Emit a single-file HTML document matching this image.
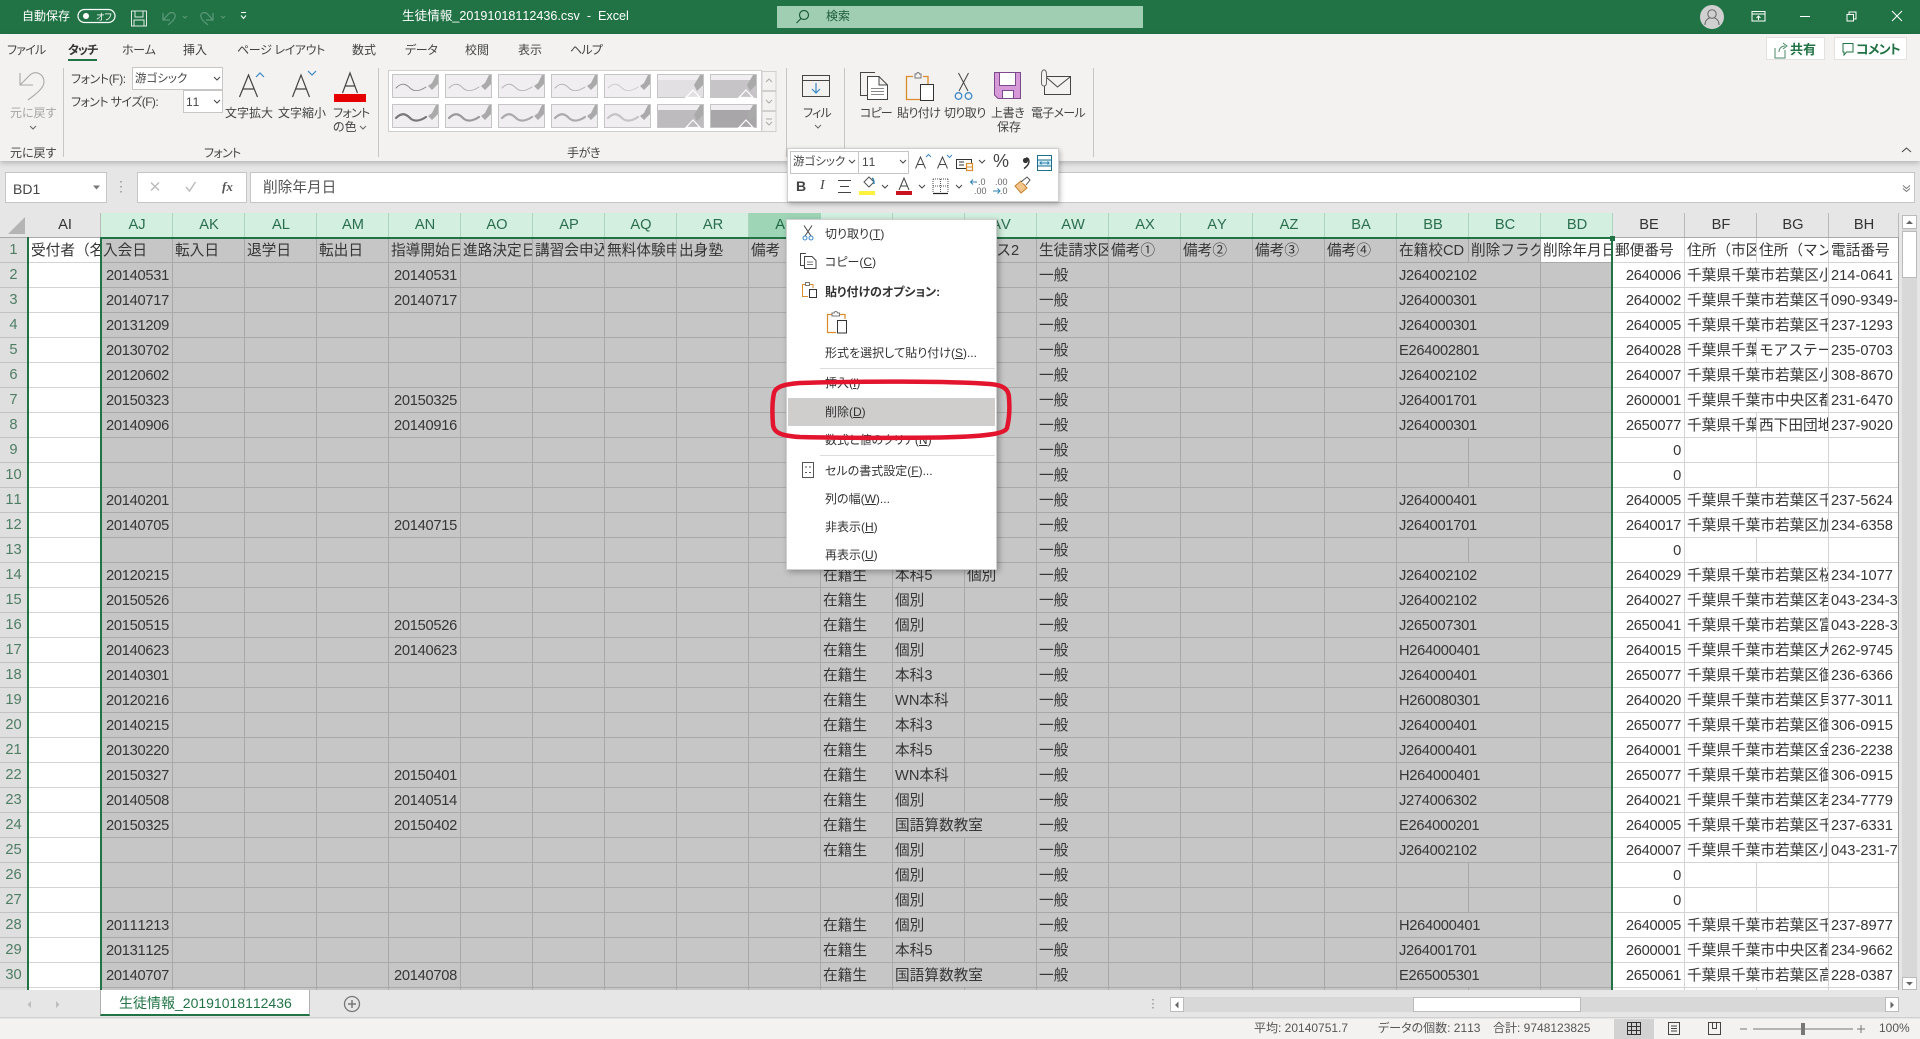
<!DOCTYPE html>
<html lang="ja"><head><meta charset="utf-8"><title>Excel</title>
<style>
html,body{margin:0;padding:0;width:1920px;height:1039px;overflow:hidden;background:#e6e6e6}
body{position:relative;font-family:"Liberation Sans","Noto Sans CJK JP",sans-serif;font-size:12px;color:#444;font-kerning:none}
.t{position:absolute;white-space:nowrap;line-height:16px;font-feature-settings:"palt";}
.k{letter-spacing:-.4px}
.b{position:absolute;box-sizing:border-box}
svg{position:absolute;left:0;top:0;width:1920px;height:1039px;pointer-events:none}
#g{position:absolute;left:29px;top:238px;width:1869px;height:752px;overflow:hidden;background:#fff;
background-image:repeating-linear-gradient(90deg,transparent 0 71px,#d4d4d4 71px 72px),repeating-linear-gradient(180deg,transparent 0 24px,#d4d4d4 24px 25px)}
#s{position:absolute;left:72px;top:0;width:1512px;height:752px;background-color:#c6c6c6;
background-image:repeating-linear-gradient(90deg,transparent 0 71px,#a9a9a9 71px 72px),repeating-linear-gradient(180deg,transparent 0 24px,#a9a9a9 24px 25px)}
#rows{position:absolute;left:0;top:0;width:1869px;color:#363636;font-size:14.67px}
.r{position:relative;height:25px}
.r i{position:absolute;top:0;height:24px;line-height:26px;width:69px;padding:0 0 0 2px;overflow:hidden;white-space:nowrap;font-style:normal;letter-spacing:0}
.AI{left:0}.AJ{left:72px}.AK{left:144px}.AL{left:216px}.AM{left:288px}.AN{left:360px}.AO{left:432px}.AP{left:504px}.AQ{left:576px}.AR{left:648px}.AS{left:720px}.AV{left:936px}.AW{left:1008px}.AX{left:1080px}.AY{left:1152px}.AZ{left:1224px}.BA{left:1296px}.BB{left:1368px}.BC{left:1440px}.BD{left:1512px}.BE{left:1584px}.BF{left:1656px}.BG{left:1728px}.BH{left:1800px}.AT{left:792px}.AU{left:864px}
.r i.AJ,.r i.AN,.r i.BE{width:68px;padding:0 3px 0 0;text-align:right;letter-spacing:-.28px}
.r i.BB{letter-spacing:-.28px;width:141px;background:#c6c6c6}
.h i{letter-spacing:0!important}
.r.h i.BB{width:69px;background:none}
.r.h i.AJ,.r.h i.AN,.r.h i.BE{width:69px;padding:0 0 0 2px;text-align:left}
.r i.o{width:141px;background:#fff}
.r i.ou{width:141px;background:#c6c6c6}
.ch{position:absolute;top:213px;height:24px;width:72px;box-sizing:border-box;padding-left:1px;text-align:center;line-height:24px;font-size:14.67px;border-right:1px solid #b9b9b9;color:#333}
.cs{background:#d3efe0;color:#2a6e4d;border-right:1px solid #aed3bf}
.rh{position:absolute;left:0;width:27px;height:25px;box-sizing:border-box;text-align:center;line-height:25px;font-size:14.67px;color:#4e7d64;border-bottom:1px solid #c2c2c2}
.m{position:absolute;white-space:nowrap;line-height:16px;font-size:12px;color:#333;left:825px;font-feature-settings:"palt"}
.d{position:absolute;white-space:nowrap;font-size:9px;line-height:9px;color:#666}
</style></head><body>
<!-- title bar -->
<div class="b" style="left:0;top:0;width:1920px;height:34px;background:#217346"></div>
<div class="b" style="left:777px;top:6px;width:366px;height:22px;background:#9fceb2"></div>
<div class="t" style="left:22px;top:8px;color:#fff">自動保存</div>
<div class="t" style="left:96px;top:9px;color:#fff;font-size:9px">オフ</div>
<div class="t" style="left:402px;top:8px;color:#fff;font-size:12.6px">生徒情報_20191018112436.csv&nbsp; -&nbsp; Excel</div>
<div class="t" style="left:826px;top:8px;color:#1d5c3a">検索</div>
<!-- ribbon -->
<div class="b" style="left:0;top:34px;width:1920px;height:127px;background:#f3f2f1;box-shadow:0 2px 5px rgba(0,0,0,.22)"></div>
<div class="t k" style="left:7px;top:42px;letter-spacing:-.8px">ファイル</div>
<div class="t" style="left:68px;top:42px;font-weight:700;color:#333;letter-spacing:-1px">タッチ</div>
<div class="b" style="left:68px;top:59px;width:29px;height:2px;background:#217346"></div>
<div class="t k" style="left:122px;top:42px">ホーム</div>
<div class="t" style="left:183px;top:42px">挿入</div>
<div class="t k" style="left:237px;top:42px">ページ レイアウト</div>
<div class="t" style="left:352px;top:42px">数式</div>
<div class="t k" style="left:405px;top:42px">データ</div>
<div class="t" style="left:465px;top:42px">校閲</div>
<div class="t" style="left:518px;top:42px">表示</div>
<div class="t k" style="left:570px;top:42px;letter-spacing:-.8px">ヘルプ</div>
<div class="b" style="left:1766px;top:37px;width:59px;height:23px;background:#fff;border:1px solid #e4e2e0"></div>
<div class="t" style="left:1790px;top:42px;color:#217346;font-weight:700;font-size:13px">共有</div>
<div class="b" style="left:1834px;top:37px;width:73px;height:23px;background:#fff;border:1px solid #e4e2e0"></div>
<div class="t" style="left:1856px;top:42px;color:#217346;font-weight:700;font-size:13px;letter-spacing:-.8px">コメント</div>

<div class="b" style="left:63px;top:68px;width:1px;height:89px;background:#c8c6c4"></div>
<div class="b" style="left:378px;top:68px;width:1px;height:89px;background:#c8c6c4"></div>
<div class="b" style="left:786px;top:68px;width:1px;height:89px;background:#c8c6c4"></div>
<div class="b" style="left:844px;top:68px;width:1px;height:89px;background:#c8c6c4"></div>
<div class="b" style="left:1093px;top:68px;width:1px;height:89px;background:#c8c6c4"></div>

<div class="t" style="left:10px;top:105px;color:#a6a6a6">元に戻す</div>
<div class="t" style="left:10px;top:145px">元に戻す</div>
<div class="t k" style="left:71px;top:71px">フォント(F):</div>
<div class="b" style="left:132px;top:67px;width:91px;height:23px;background:#fff;border:1px solid #c8c6c4"></div>
<div class="t" style="left:135px;top:71px;font-size:11.5px">游ゴシック</div>
<div class="t k" style="left:71px;top:94px;letter-spacing:-.6px">フォント サイズ(F):</div>
<div class="b" style="left:183px;top:90px;width:40px;height:23px;background:#fff;border:1px solid #c8c6c4"></div>
<div class="t" style="left:186px;top:94px">11</div>
<div class="t" style="left:225px;top:105px">文字拡大</div>
<div class="t" style="left:278px;top:105px">文字縮小</div>
<div class="t k" style="left:333px;top:105px;letter-spacing:-.7px">フォント</div>
<div class="t" style="left:333px;top:119px">の色</div>
<div class="t k" style="left:204px;top:145px;letter-spacing:-.7px">フォント</div>
<div class="t k" style="left:567px;top:145px">手がき</div>
<div class="t k" style="left:803px;top:105px;letter-spacing:-.9px">フィル</div>
<div class="t k" style="left:860px;top:105px;letter-spacing:-.9px">コピー</div>
<div class="t k" style="left:897px;top:105px;letter-spacing:-.6px">貼り付け</div>
<div class="t k" style="left:944px;top:105px;letter-spacing:-.6px">切り取り</div>
<div class="t k" style="left:991px;top:105px">上書き</div>
<div class="t" style="left:997px;top:119px">保存</div>
<div class="t k" style="left:1031px;top:105px;letter-spacing:-.7px">電子メール</div>
<!-- formula bar -->
<div class="b" style="left:5px;top:172px;width:102px;height:31px;background:#fff;border:1px solid #c6c6c6"></div>
<div class="t" style="left:13px;top:181px;font-size:14px;color:#444;font-feature-settings:normal">BD1</div>
<div class="b" style="left:137px;top:172px;width:110px;height:31px;background:#fff;border:1px solid #c6c6c6"></div>
<div class="b" style="left:250px;top:172px;width:1665px;height:31px;background:#fff;border:1px solid #c6c6c6"></div>
<div class="t" style="left:263px;top:180px;font-size:14.67px;color:#555;font-feature-settings:normal">削除年月日</div>
<div class="t" style="left:222px;top:179px;font-family:'Liberation Serif',serif;font-style:italic;font-weight:700;font-size:13px;color:#555">fx</div>
<!-- corner & headers -->
<div class="b" style="left:0;top:213px;width:1900px;height:25px;background:#e6e6e6"></div>
<div class="ch" style="left:29px;">AI</div>
<div class="ch cs" style="left:101px">AJ</div><div class="ch cs" style="left:173px">AK</div><div class="ch cs" style="left:245px">AL</div><div class="ch cs" style="left:317px">AM</div><div class="ch cs" style="left:389px">AN</div><div class="ch cs" style="left:461px">AO</div><div class="ch cs" style="left:533px">AP</div><div class="ch cs" style="left:605px">AQ</div><div class="ch cs" style="left:677px">AR</div><div class="ch cs" style="left:749px;background:#9fd5b7;border-color:#9fd5b7;color:#1f6a43">AS</div><div class="ch cs" style="left:821px">AT</div><div class="ch cs" style="left:893px">AU</div><div class="ch cs" style="left:965px">AV</div><div class="ch cs" style="left:1037px">AW</div><div class="ch cs" style="left:1109px">AX</div><div class="ch cs" style="left:1181px">AY</div><div class="ch cs" style="left:1253px">AZ</div><div class="ch cs" style="left:1325px">BA</div><div class="ch cs" style="left:1397px">BB</div><div class="ch cs" style="left:1469px">BC</div><div class="ch cs" style="left:1541px">BD</div>
<div class="ch" style="left:1613px">BE</div><div class="ch" style="left:1685px">BF</div><div class="ch" style="left:1757px">BG</div><div class="ch" style="left:1829px;width:70px">BH</div>
<div class="b" style="left:0;top:237px;width:1899px;height:1px;background:#a8a8a8"></div>
<!-- row headers -->
<div class="b" style="left:0;top:238px;width:27px;height:752px;background:#dfdfdf"></div>
<div class="rh" style="top:238px">1</div><div class="rh" style="top:263px">2</div><div class="rh" style="top:288px">3</div><div class="rh" style="top:313px">4</div><div class="rh" style="top:338px">5</div><div class="rh" style="top:363px">6</div><div class="rh" style="top:388px">7</div><div class="rh" style="top:413px">8</div><div class="rh" style="top:438px">9</div><div class="rh" style="top:463px">10</div><div class="rh" style="top:488px">11</div><div class="rh" style="top:513px">12</div><div class="rh" style="top:538px">13</div><div class="rh" style="top:563px">14</div><div class="rh" style="top:588px">15</div><div class="rh" style="top:613px">16</div><div class="rh" style="top:638px">17</div><div class="rh" style="top:663px">18</div><div class="rh" style="top:688px">19</div><div class="rh" style="top:713px">20</div><div class="rh" style="top:738px">21</div><div class="rh" style="top:763px">22</div><div class="rh" style="top:788px">23</div><div class="rh" style="top:813px">24</div><div class="rh" style="top:838px">25</div><div class="rh" style="top:863px">26</div><div class="rh" style="top:888px">27</div><div class="rh" style="top:913px">28</div><div class="rh" style="top:938px">29</div><div class="rh" style="top:963px">30</div>
<div class="b" style="left:27px;top:237px;width:2px;height:753px;background:#217346"></div>
<!-- grid -->
<div id="g"><div id="s"></div>
<div class="b" style="left:1512px;top:0;width:71px;height:24px;background:#fff"></div>
<div id="rows">
<div class="r h"><i class="AI">受付者（名前）</i><i class="AJ">入会日</i><i class="AK">転入日</i><i class="AL">退学日</i><i class="AM">転出日</i><i class="AN">指導開始日</i><i class="AO">進路決定日</i><i class="AP">講習会申込</i><i class="AQ">無料体験申</i><i class="AR">出身塾</i><i class="AS">備考</i><i class="AV">コース2</i><i class="AW">生徒請求区分</i><i class="AX">備考①</i><i class="AY">備考②</i><i class="AZ">備考③</i><i class="BA">備考④</i><i class="BB">在籍校CD</i><i class="BC">削除フラグ</i><i class="BD">削除年月日</i><i class="BE">郵便番号</i><i class="BF">住所（市区</i><i class="BG">住所（マン</i><i class="BH">電話番号</i></div>
<div class="r"><i class="AJ">20140531</i><i class="AN">20140531</i><i class="AW">一般</i><i class="BB">J264002102</i><i class="BE">2640006</i><i class="BF o">千葉県千葉市若葉区小</i><i class="BH">214-0641</i></div>
<div class="r"><i class="AJ">20140717</i><i class="AN">20140717</i><i class="AW">一般</i><i class="BB">J264000301</i><i class="BE">2640002</i><i class="BF o">千葉県千葉市若葉区千</i><i class="BH">090-9349-</i></div>
<div class="r"><i class="AJ">20131209</i><i class="AW">一般</i><i class="BB">J264000301</i><i class="BE">2640005</i><i class="BF o">千葉県千葉市若葉区千</i><i class="BH">237-1293</i></div>
<div class="r"><i class="AJ">20130702</i><i class="AW">一般</i><i class="BB">E264002801</i><i class="BE">2640028</i><i class="BF">千葉県千葉市</i><i class="BG">モアステーション</i><i class="BH">235-0703</i></div>
<div class="r"><i class="AJ">20120602</i><i class="AW">一般</i><i class="BB">J264002102</i><i class="BE">2640007</i><i class="BF o">千葉県千葉市若葉区小</i><i class="BH">308-8670</i></div>
<div class="r"><i class="AJ">20150323</i><i class="AN">20150325</i><i class="AW">一般</i><i class="BB">J264001701</i><i class="BE">2600001</i><i class="BF o">千葉県千葉市中央区都</i><i class="BH">231-6470</i></div>
<div class="r"><i class="AJ">20140906</i><i class="AN">20140916</i><i class="AW">一般</i><i class="BB">J264000301</i><i class="BE">2650077</i><i class="BF">千葉県千葉市</i><i class="BG">西下田団地</i><i class="BH">237-9020</i></div>
<div class="r"><i class="AW">一般</i><i class="BE">0</i></div>
<div class="r"><i class="AW">一般</i><i class="BE">0</i></div>
<div class="r"><i class="AJ">20140201</i><i class="AW">一般</i><i class="BB">J264000401</i><i class="BE">2640005</i><i class="BF o">千葉県千葉市若葉区千</i><i class="BH">237-5624</i></div>
<div class="r"><i class="AJ">20140705</i><i class="AN">20140715</i><i class="AW">一般</i><i class="BB">J264001701</i><i class="BE">2640017</i><i class="BF o">千葉県千葉市若葉区加</i><i class="BH">234-6358</i></div>
<div class="r"><i class="AW">一般</i><i class="BE">0</i></div>
<div class="r"><i class="AJ">20120215</i><i class="AT">在籍生</i><i class="AU">本科5</i><i class="AV">個別</i><i class="AW">一般</i><i class="BB">J264002102</i><i class="BE">2640029</i><i class="BF o">千葉県千葉市若葉区桜</i><i class="BH">234-1077</i></div>
<div class="r"><i class="AJ">20150526</i><i class="AT">在籍生</i><i class="AU">個別</i><i class="AW">一般</i><i class="BB">J264002102</i><i class="BE">2640027</i><i class="BF o">千葉県千葉市若葉区若</i><i class="BH">043-234-3</i></div>
<div class="r"><i class="AJ">20150515</i><i class="AN">20150526</i><i class="AT">在籍生</i><i class="AU">個別</i><i class="AW">一般</i><i class="BB">J265007301</i><i class="BE">2650041</i><i class="BF o">千葉県千葉市若葉区富</i><i class="BH">043-228-3</i></div>
<div class="r"><i class="AJ">20140623</i><i class="AN">20140623</i><i class="AT">在籍生</i><i class="AU">個別</i><i class="AW">一般</i><i class="BB">H264000401</i><i class="BE">2640015</i><i class="BF o">千葉県千葉市若葉区大</i><i class="BH">262-9745</i></div>
<div class="r"><i class="AJ">20140301</i><i class="AT">在籍生</i><i class="AU">本科3</i><i class="AW">一般</i><i class="BB">J264000401</i><i class="BE">2650077</i><i class="BF o">千葉県千葉市若葉区御</i><i class="BH">236-6366</i></div>
<div class="r"><i class="AJ">20120216</i><i class="AT">在籍生</i><i class="AU">WN本科</i><i class="AW">一般</i><i class="BB">H260080301</i><i class="BE">2640020</i><i class="BF o">千葉県千葉市若葉区貝</i><i class="BH">377-3011</i></div>
<div class="r"><i class="AJ">20140215</i><i class="AT">在籍生</i><i class="AU">本科3</i><i class="AW">一般</i><i class="BB">J264000401</i><i class="BE">2650077</i><i class="BF o">千葉県千葉市若葉区御</i><i class="BH">306-0915</i></div>
<div class="r"><i class="AJ">20130220</i><i class="AT">在籍生</i><i class="AU">本科5</i><i class="AW">一般</i><i class="BB">J264000401</i><i class="BE">2640001</i><i class="BF o">千葉県千葉市若葉区金</i><i class="BH">236-2238</i></div>
<div class="r"><i class="AJ">20150327</i><i class="AN">20150401</i><i class="AT">在籍生</i><i class="AU">WN本科</i><i class="AW">一般</i><i class="BB">H264000401</i><i class="BE">2650077</i><i class="BF o">千葉県千葉市若葉区御</i><i class="BH">306-0915</i></div>
<div class="r"><i class="AJ">20140508</i><i class="AN">20140514</i><i class="AT">在籍生</i><i class="AU">個別</i><i class="AW">一般</i><i class="BB">J274006302</i><i class="BE">2640021</i><i class="BF o">千葉県千葉市若葉区若</i><i class="BH">234-7779</i></div>
<div class="r"><i class="AJ">20150325</i><i class="AN">20150402</i><i class="AT">在籍生</i><i class="AU ou">国語算数教室</i><i class="AW">一般</i><i class="BB">E264000201</i><i class="BE">2640005</i><i class="BF o">千葉県千葉市若葉区千</i><i class="BH">237-6331</i></div>
<div class="r"><i class="AT">在籍生</i><i class="AU">個別</i><i class="AW">一般</i><i class="BB">J264002102</i><i class="BE">2640007</i><i class="BF o">千葉県千葉市若葉区小</i><i class="BH">043-231-7</i></div>
<div class="r"><i class="AU">個別</i><i class="AW">一般</i><i class="BE">0</i></div>
<div class="r"><i class="AU">個別</i><i class="AW">一般</i><i class="BE">0</i></div>
<div class="r"><i class="AJ">20111213</i><i class="AT">在籍生</i><i class="AU">個別</i><i class="AW">一般</i><i class="BB">H264000401</i><i class="BE">2640005</i><i class="BF o">千葉県千葉市若葉区千</i><i class="BH">237-8977</i></div>
<div class="r"><i class="AJ">20131125</i><i class="AT">在籍生</i><i class="AU">本科5</i><i class="AW">一般</i><i class="BB">J264001701</i><i class="BE">2600001</i><i class="BF o">千葉県千葉市中央区都</i><i class="BH">234-9662</i></div>
<div class="r"><i class="AJ">20140707</i><i class="AN">20140708</i><i class="AT">在籍生</i><i class="AU ou">国語算数教室</i><i class="AW">一般</i><i class="BB">E265005301</i><i class="BE">2650061</i><i class="BF o">千葉県千葉市若葉区高</i><i class="BH">228-0387</i></div>
</div></div>
<!-- selection -->
<div class="b" style="left:100px;top:237px;width:1513px;height:2px;background:#217346"></div>
<div class="b" style="left:100px;top:237px;width:2px;height:753px;background:#217346"></div>
<div class="b" style="left:1611px;top:237px;width:2px;height:753px;background:#217346"></div>
<div class="b" style="left:1610px;top:236px;width:5px;height:5px;background:#217346"></div>
<div class="b" style="left:1898px;top:238px;width:1px;height:752px;background:#a0a0a0"></div>
<!-- v scroll -->
<div class="b" style="left:1899px;top:213px;width:21px;height:777px;background:#e6e6e6"></div>
<div class="b" style="left:1902px;top:215px;width:15px;height:775px;background:#d8d8d8"></div>
<div class="b" style="left:1902px;top:215px;width:15px;height:14px;background:#fff;border:1px solid #bbb"></div>
<div class="b" style="left:1902px;top:231px;width:15px;height:47px;background:#fff;border:1px solid #bbb"></div>
<div class="b" style="left:1902px;top:977px;width:15px;height:13px;background:#fff;border:1px solid #bbb"></div>
<!-- tabs -->
<div class="b" style="left:0;top:990px;width:1920px;height:28px;background:#e6e6e6;border-bottom:1px solid #cfcfcf"></div>
<div class="b" style="left:100px;top:990px;width:210px;height:26px;background:#fff;border-bottom:2px solid #217346;border-left:1px solid #b0b0b0;border-right:1px solid #b0b0b0"></div>
<div class="t" style="left:119px;top:995px;color:#217346;font-size:14px;font-feature-settings:normal">生徒情報_20191018112436</div>
<div class="b" style="left:1183px;top:997px;width:702px;height:15px;background:#d8d8d8"></div>
<div class="b" style="left:1170px;top:997px;width:14px;height:15px;background:#fff;border:1px solid #bbb"></div>
<div class="b" style="left:1413px;top:997px;width:168px;height:15px;background:#fff;border:1px solid #bbb"></div>
<div class="b" style="left:1885px;top:997px;width:14px;height:15px;background:#fff;border:1px solid #bbb"></div>
<!-- status -->
<div class="b" style="left:0;top:1019px;width:1920px;height:20px;background:#f3f2f1"></div>
<div class="b" style="left:1614px;top:1019px;width:40px;height:20px;background:#d2d2d2"></div>
<div class="t" style="left:1254px;top:1020px;font-size:12px;color:#555">平均: 20140751.7</div>
<div class="t" style="left:1378px;top:1020px;font-size:12px;color:#555">データの個数: 2113</div>
<div class="t" style="left:1493px;top:1020px;font-size:12px;color:#555">合計: 9748123825</div>
<div class="t" style="left:1879px;top:1020px;font-size:12px;color:#555">100%</div>

<!-- ribbon/title icons -->
<svg viewBox="0 0 1920 1039" fill="none" stroke-linecap="butt">
<!-- title -->
<rect x="78" y="9.5" width="37" height="13" rx="6.5" stroke="#fff" stroke-width="1.2"/><circle cx="86" cy="16" r="3" fill="#fff"/>
<path d="M131.5 11H146.5V26H131.5ZM135 11V17H143V11M134 26V20H144V26" stroke="#fff" stroke-opacity=".85"/>
<path d="M163 13V20H170M163 20L169 13.5C173 11 176 14 175 17C174 21 170 23 168 25" stroke="#5b9a78" stroke-width="1.2"/>
<path d="M213 13V20H206M213 20L207 13.5C203 11 200 14 201 17C202 21 206 23 208 25" stroke="#5b9a78" stroke-width="1.2"/>
<path d="M183 16l2 2 2-2M221 16l2 2 2-2" stroke="#5b9a78"/>
<path d="M241 12.5h5M241 15.5l2.5 3 2.5-3" stroke="#fff"/>
<circle cx="804" cy="15" r="4.5" stroke="#1d5c3a" stroke-width="1.2"/><path d="M801 18.5L796.5 23" stroke="#1d5c3a" stroke-width="1.2"/>
<ellipse cx="1712" cy="17" rx="12" ry="12" fill="#d0d0d0"/><circle cx="1712" cy="14" r="4.2" stroke="#666"/><path d="M1705 25C1705 20 1708 18.5 1709.5 18M1719 25C1719 20 1716 18.5 1714.500 18" stroke="#666"/>
<path d="M1752 11.500H1765V21H1752ZM1752 14H1765M1758.500 20V16M1756.500 18L1758.500 16L1760.500 18" stroke="#fff"/>
<path d="M1800 16.500H1810" stroke="#fff"/>
<path d="M1847 14.500H1853.500V21H1847ZM1849 14.500V12H1856V19H1853.500" stroke="#fff"/>
<path d="M1892 11L1902 21M1902 11L1892 21" stroke="#fff"/>
<!-- share/comment -->
<path d="M1775 48V58H1785V50M1779 52C1779 48 1782 46 1785 46M1783 43L1787 46L1783 49" stroke="#4c8a68"/>
<path d="M1843 43.500H1853V52H1846.500L1844 55V52H1843Z" stroke="#217346"/>
<!-- combos chevrons -->
<path d="M214 77l3 3 3-3M214 100l3 3 3-3" stroke="#444"/>
<path d="M30 126l3 3 3-3M436 125l3 3 3-3M815 125l3 3 3-3M360 126l3 3 3-3" stroke="#666" stroke-width="1"/>
<!-- undo -->
<path d="M20 73V85H33M20 85L30 75C36 70 44 74 44 82C44 88 36 94 28 100" stroke="#a8a8a8" stroke-width="1.1"/>
<!-- big A -->
<path d="M239.500 97L248.500 75L257.500 97M243 89H254" stroke="#444" stroke-width="1.2"/><path d="M256 77l4-4 4 4" stroke="#3a88c5" stroke-width="1.2"/>
<path d="M292.500 97L301 75L309.500 97M296 89H306" stroke="#444" stroke-width="1.2"/><path d="M308 71l4 4 4-4" stroke="#3a88c5" stroke-width="1.2"/>
<path d="M342.500 93L350 73L357.500 93M345.500 86H354.500" stroke="#444" stroke-width="1.2"/>
<rect x="334" y="94" width="32" height="8" fill="#e60000"/>
<!-- gallery -->
<rect x="388.500" y="70.500" width="373" height="61" fill="#fff" stroke="#d0cece"/>
<g stroke="#c5c5c5" fill="#f1eef2">
<rect x="392.500" y="74.500" width="46" height="23"/><rect x="445.500" y="74.500" width="46" height="23"/><rect x="498.500" y="74.500" width="46" height="23"/><rect x="551.500" y="74.500" width="46" height="23"/><rect x="604.500" y="74.500" width="46" height="23"/>
<rect x="392.500" y="104.500" width="46" height="23"/><rect x="445.500" y="104.500" width="46" height="23"/><rect x="498.500" y="104.500" width="46" height="23"/><rect x="551.500" y="104.500" width="46" height="23"/><rect x="604.500" y="104.500" width="46" height="23"/>
<rect x="657.500" y="74.500" width="46" height="23"/><rect x="710.500" y="74.500" width="46" height="23"/>
<rect x="657.500" y="104.500" width="46" height="23"/><rect x="710.500" y="104.500" width="46" height="23"/>
</g>
<rect x="658" y="80" width="45" height="17" fill="#e2e0e2"/><rect x="711" y="80" width="45" height="17" fill="#c6c4c6"/>
<rect x="658" y="110" width="45" height="17" fill="#bdbbbd"/><rect x="711" y="110" width="45" height="17" fill="#a8a6a8"/>
<g stroke-linecap="round">
<path d="M396 88C402 82 406 84 410 88C414 92 420 91 426 87" stroke="#888" stroke-width=".9"/>
<path d="M449 88C455 82 459 84 463 88C467 92 473 91 479 87" stroke="#b0b0b0" stroke-width=".9"/>
<path d="M502 88C508 82 512 84 516 88C520 92 526 91 532 87" stroke="#b0b0b0" stroke-width=".9"/>
<path d="M555 88C561 82 565 84 569 88C573 92 579 91 585 87" stroke="#b0b0b0" stroke-width=".9"/>
<path d="M608 88C614 82 618 84 622 88C626 92 632 91 638 87" stroke="#c8c8c8" stroke-width=".9"/>
<path d="M396 118C402 112 406 114 410 118C414 122 420 121 426 117" stroke="#777" stroke-width="2.2"/>
<path d="M449 118C455 112 459 114 463 118C467 122 473 121 479 117" stroke="#999" stroke-width="2.2"/>
<path d="M502 118C508 112 512 114 516 118C520 122 526 121 532 117" stroke="#aaa" stroke-width="2.2"/>
<path d="M555 118C561 112 565 114 569 118C573 122 579 121 585 117" stroke="#aaa" stroke-width="2.2"/>
<path d="M608 118C614 112 618 114 622 118C626 122 632 121 638 117" stroke="#c4c4c4" stroke-width="2.2"/>
</g>
<g fill="#aaa">
<path d="M428 86L432 83L436 75L438 75V84L432 90Z"/><path d="M481 86L485 83L489 75L491 75V84L485 90Z"/><path d="M534 86L538 83L542 75L544 75V84L538 90Z"/><path d="M587 86L591 83L595 75L597 75V84L591 90Z"/><path d="M640 86L644 83L648 75L650 75V84L644 90Z"/>
<path d="M428 116L432 113L436 105L438 105V114L432 120Z"/><path d="M481 116L485 113L489 105L491 105V114L485 120Z"/><path d="M534 116L538 113L542 105L544 105V114L538 120Z"/><path d="M587 116L591 113L595 105L597 105V114L591 120Z"/><path d="M640 116L644 113L648 105L650 105V114L644 120Z"/>
<path d="M694 85L700 75H703V85L697 91Z"/><path d="M747 85L753 75H756V85L750 91Z"/><path d="M694 115L700 105H703V115L697 121Z"/><path d="M747 115L753 105H756V115L750 121Z"/>
</g>
<g stroke="#fff" stroke-width="1.2" fill="none"><path d="M686 97.500L693 90L700 97.500Z"/><path d="M739 97.500L746 90L753 97.500Z"/><path d="M686 127.500L693 120L700 127.500Z"/><path d="M739 127.500L746 120L753 127.500Z"/></g>
<rect x="762" y="71.500" width="14" height="19" fill="#f3f2f1" stroke="#d0cece"/><rect x="762" y="91.500" width="14" height="19" fill="#f3f2f1" stroke="#d0cece"/><rect x="762" y="111.500" width="14" height="20" fill="#f3f2f1" stroke="#d0cece"/>
<path d="M766 82l3-3 3 3M766 100l3 3 3-3M766 119h6M766 122l3 3 3-3" stroke="#aaa"/>
<!-- fill -->
<rect x="802.500" y="75.500" width="27" height="21" stroke="#444"/><path d="M802 80.500H830" stroke="#444"/><path d="M816 83V93M812 89l4 4 4-4" stroke="#3a88c5" stroke-width="1.2"/>
<!-- copy -->
<path d="M875 72.500H860.500V95.500H867" stroke="#444"/>
<path d="M867.500 76.500H879L887.500 85V99.500H867.500ZM879 76.500V85H887.500" stroke="#444" fill="#fff"/>
<path d="M871 88.500H884M871 91.500H884M871 94.500H884" stroke="#888"/>
<!-- paste -->
<path d="M913 76.500H906.500V99.500H920M923 76.500H928V84" stroke="#d98c2c" stroke-width="1.3"/>
<path d="M915 78V74H916.500C917 72 919 72 919.500 74H921V78Z" stroke="#777" fill="#f3f2f1"/>
<rect x="920.500" y="84.500" width="13" height="16" fill="#fff" stroke="#333"/>
<!-- scissors -->
<path d="M958.500 73L968 91M968.500 73L959 91" stroke="#444"/>
<circle cx="958.500" cy="96" r="3.300" stroke="#3a88c5" stroke-width="1.3"/><circle cx="968.500" cy="96" r="3.300" stroke="#3a88c5" stroke-width="1.3"/>
<!-- save -->
<path d="M994.500 72.500H1020.500V98.500H998L994.500 95Z" fill="#d79ad8" stroke="#7c4a8c"/>
<rect x="999.500" y="72.500" width="16" height="13" fill="#fff" stroke="#7c4a8c"/><rect x="1002.500" y="90.500" width="11" height="8" fill="#fff" stroke="#7c4a8c"/>
<!-- mail -->
<rect x="1044.500" y="76.500" width="26" height="18" stroke="#444" fill="#f3f2f1"/><path d="M1046 77L1057.500 87L1070 77" stroke="#444"/>
<path d="M1041.500 74C1041.500 68.500 1046.500 68.500 1046.500 74V83C1046.500 87 1041.500 87 1041.500 83V74" stroke="#666" fill="#f3f2f1"/>
<path d="M1902 152l4.500-4 4.500 4" stroke="#444"/>
<!-- formula -->
<path d="M93 185.500h7l-3.500 4z" fill="#777"/><path d="M121 181v1.500M121 186v1.500M121 191v1.500" stroke="#aaa" stroke-width="2"/>
<path d="M151 182.500l8 8M159 182.500l-8 8" stroke="#bcbcbc" stroke-width="1.5"/><path d="M186 187l3.500 4 6-9" stroke="#bcbcbc" stroke-width="1.5"/>
<path d="M1903 185.500l3.500 3 3.500-3M1903 188.500l3.500 3 3.500-3" stroke="#777"/>
<path d="M25 217V234H8Z" fill="#b4b4b4"/>
<!-- scrollbars -->
<path d="M1906 224l3.500-3.500 3.500 3.500z" fill="#666"/><path d="M1906 982h7l-3.500 3.500z" fill="#666"/>
<path d="M1178.500 1001.500v7l-3.500-3.500z" fill="#666"/><path d="M1890.500 1001.500v7l3.500-3.500z" fill="#666"/>
<path d="M31 1001v7l-3.500-3.500zM56 1001v7l3.500-3.500z" fill="#bdbdbd"/>
<circle cx="352" cy="1004" r="7.500" stroke="#777" stroke-width="1.3"/><path d="M348 1004h8M352 1000v8" stroke="#777" stroke-width="1.5"/>
<path d="M1153 999v1.500M1153 1003v1.500M1153 1007v1.500" stroke="#999" stroke-width="1.500"/>
<!-- status -->
<path d="M1627.500 1022.500h13v12h-13zM1627.500 1026.500h13M1627.500 1030.500h13M1631.500 1022.500v12M1636.500 1022.500v12" stroke="#333"/>
<path d="M1668.500 1022.500h11v12h-11zM1671 1026h6M1671 1028.500h6M1671 1031h6" stroke="#444"/>
<path d="M1708.500 1022.500h12v12h-12zM1712.500 1022.500v6h4v-6" stroke="#444"/>
<path d="M1740 1029h7M1753 1029h100" stroke="#777"/><rect x="1801" y="1023" width="4" height="12" fill="#777"/><path d="M1857 1029h8M1861 1025v8" stroke="#777"/>
</svg>

<!-- mini toolbar -->
<div class="b" style="left:787px;top:148px;width:272px;height:54px;background:#fff;border:1px solid #d0d0d0;box-shadow:1px 2px 5px rgba(0,0,0,.28)"></div>
<div class="b" style="left:790px;top:151px;width:69px;height:23px;border:1px solid #c6c6c6;background:#fff"></div>
<div class="b" style="left:858px;top:151px;width:51px;height:23px;border:1px solid #c6c6c6;background:#fff"></div>
<div class="t" style="left:793px;top:154px;font-size:11.5px">游ゴシック</div>
<div class="t" style="left:862px;top:154px;font-size:12px">11</div>
<div class="t" style="left:993px;top:153px;font-size:18px;color:#444">%</div>
<div class="t" style="left:796px;top:178px;font-size:14px;font-weight:700;color:#444">B</div>
<div class="t" style="left:820px;top:178px;font-size:14px;font-style:italic;font-family:'Liberation Serif',serif;color:#444">I</div>
<div class="d" style="left:978px;top:178px">.0</div><div class="d" style="left:974px;top:187px">.00</div>
<div class="d" style="left:995px;top:178px">.00</div><div class="d" style="left:1000px;top:187px">.0</div>
<!-- context menu -->
<div class="b" style="left:786px;top:219px;width:211px;height:351px;background:#fff;border:1px solid #d0d0d0;box-shadow:2px 2px 6px rgba(0,0,0,.3)"></div>
<div class="b" style="left:788px;top:398px;width:207px;height:28px;background:#cfcecd"></div>
<div class="b" style="left:820px;top:368px;width:175px;height:1px;background:#dcdcdc"></div>
<div class="b" style="left:820px;top:455px;width:175px;height:1px;background:#dcdcdc"></div>
<div class="m" style="top:226px">切り取り(<u>T</u>)</div>
<div class="m" style="top:254px">コピー(<u>C</u>)</div>
<div class="m" style="top:284px;font-weight:700;">貼り付けのオプション:</div>
<div class="m" style="top:345px">形式を選択して貼り付け(<u>S</u>)...</div>
<div class="m" style="top:375px">挿入(<u>I</u>)</div>
<div class="m" style="top:404px">削除(<u>D</u>)</div>
<div class="m" style="top:432px">数式と値のクリア(<u>N</u>)</div>
<div class="m" style="top:463px">セルの書式設定(<u>F</u>)...</div>
<div class="m" style="top:491px">列の幅(<u>W</u>)...</div>
<div class="m" style="top:519px">非表示(<u>H</u>)</div>
<div class="m" style="top:547px">再表示(<u>U</u>)</div>
<svg viewBox="0 0 1920 1039" fill="none">
<path d="M849 160l3 3 3-3M900 160l3 3 3-3M979 160l3 3 3-3M882 185l3 3 3-3M919 185l3 3 3-3M956 185l3 3 3-3" stroke="#444"/>
<!-- mini A -->
<path d="M915.500 168.500L920.500 157L925.500 168.500M917.300 164.500H923.700" stroke="#444"/><path d="M926 157l2.500-2.500 2.500 2.500" stroke="#3a88c5"/>
<path d="M937.500 168.500L942.500 157L947.500 168.500M939.300 164.500H945.700" stroke="#444"/><path d="M947 155l2.500 2.500 2.500-2.500" stroke="#3a88c5"/>
<!-- accounting -->
<rect x="956.500" y="159.500" width="15" height="9" stroke="#333"/><path d="M959 162h5M959 165h5" stroke="#333"/><rect x="966.500" y="163.500" width="6" height="7" fill="#fff" stroke="#d98c2c" stroke-width="1.200"/><path d="M966 167h7" stroke="#d98c2c"/>
<!-- comma -->
<path d="M1026 158c3 0 3.500 3 2.500 5.500c-1 2.500-3 4-4.500 5" stroke="#333" stroke-width="1.5"/><circle cx="1025.500" cy="160.500" r="2.600" fill="#333"/>
<!-- wrap -->
<rect x="1037.500" y="155.500" width="14" height="15" stroke="#1f6e8c"/><path d="M1037.500 160h14M1037.500 166h14" stroke="#1f6e8c"/><rect x="1038" y="160.500" width="13" height="5" fill="#d6eef6"/><path d="M1040 163h9M1041.500 161.500l-1.500 1.500 1.500 1.500M1047.500 161.500l1.500 1.500-1.500 1.500" stroke="#2e82b0"/>
<!-- align -->
<path d="M838 180.500H851M840 186.500H849M838 192.500H851" stroke="#444"/>
<!-- fill -->
<path d="M864 182l5-5 5 5-5 5Z" stroke="#555"/><path d="M872 178c2 1 2 4 2 6" stroke="#2e82b0" stroke-width="1.500"/>
<rect x="859" y="191" width="16" height="4" fill="#fff23c"/>
<path d="M899 190L904 178L909 190M901 186H907" stroke="#444"/><rect x="896" y="191" width="16" height="4" fill="#c8141c"/>
<!-- borders -->
<path d="M933 179H948M933 186H948M940.500 179V193M933 179V193M948 179V193" stroke="#555" stroke-dasharray="1 1"/><path d="M933 193.500H948" stroke="#222" stroke-width="1.200"/>
<!-- decimals -->
<path d="M971 182h6M973 179.500L970.500 182l2.500 2.500" stroke="#2e82b0"/>
<path d="M993 191h7M997.500 188.500L1000 191l-2.500 2.500" stroke="#2e82b0"/>
<!-- brush -->
<path d="M1015 186l6 7 6-5-6-7z" fill="#f2c58c" stroke="#c87f2c"/><path d="M1021 182l6-5 3 3-4 5" stroke="#555" fill="#fff"/>
<!-- menu icons -->
<path d="M804 225.500L811 236M812 225.500L805 236" stroke="#444"/><circle cx="805" cy="238" r="2" stroke="#3a88c5"/><circle cx="811" cy="238" r="2" stroke="#3a88c5"/>
<path d="M806 253.500H800.500V265.500H804" stroke="#444"/><path d="M804.500 256.500H812L816 260.500V268.500H804.500Z" stroke="#444"/><path d="M807 262h6M807 264.500h6" stroke="#777"/>
<path d="M805 284.500H802.500V296.500H808" stroke="#d98c2c"/><path d="M810 284.500H813V288" stroke="#d98c2c"/><rect x="805.500" y="282.500" width="4" height="3" stroke="#777"/><rect x="809.500" y="289.500" width="7" height="8" stroke="#333" fill="#fff"/>
<path d="M834 314.500H827.500V332.500H836M840 314.500H845V319" stroke="#d98c2c" stroke-width="1.200"/><path d="M832 316v-3h2c.5-2 3-2 3.500 0h2v3z" stroke="#777" fill="#fff"/><rect x="837.500" y="320.500" width="9" height="12.500" stroke="#333" fill="#fff"/>
<rect x="802.500" y="462.500" width="11" height="15" stroke="#555"/><path d="M805 467h2M809 467h2M805 472.500h2M809 472.500h2" stroke="#555"/>
<!-- red ring -->
<path d="M800 383C860 381 950 381 990 384C1003 385 1009 389 1009 398C1010 410 1009 420 1007 428C1005 434 985 436.500 940 437.500C890 438 840 438 800 437C782 436 774 433 773 425C772 412 772 402 774 393C776 386 786 384 800 383Z" stroke="#e3152e" stroke-width="4.500"/>
</svg>
</body></html>
